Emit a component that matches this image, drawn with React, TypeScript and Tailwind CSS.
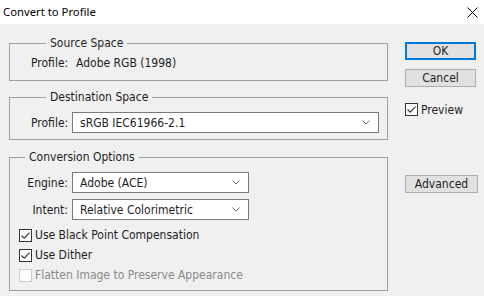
import React from "react";

const ui = { fontFamily: '"DejaVu Sans Condensed", "DejaVu Sans", sans-serif' };

function Check({ checked = false, disabled = false }: { checked?: boolean; disabled?: boolean }) {
  return (
    <span
      className={
        "flex h-[13px] w-[13px] shrink-0 items-center justify-center border " +
        (disabled ? "border-[#cccccc] bg-[#fcfcfc]" : "border-[#333333] bg-white")
      }
    >
      {checked && (
        <svg width="11" height="11" viewBox="0 0 11 11">
          <path d="M1.5 5.5 L4.2 8.2 L9.6 2.6" fill="none" stroke="#333" strokeWidth="1.1" />
        </svg>
      )}
    </span>
  );
}

function Select({ value, width }: { value: string; width: string }) {
  return (
    <div className={`flex h-[21px] items-center justify-between border border-[#7a7a7a] bg-white pl-[7px] pr-[8px] ${width}`}>
      <span>{value}</span>
      <svg width="8" height="5" viewBox="0 0 8 5">
        <path d="M0.5 0.5 L4 4 L7.5 0.5" fill="none" stroke="#6d6d6d" strokeWidth="1" />
      </svg>
    </div>
  );
}

function Group({ title, className, children }: { title: string; className: string; children: React.ReactNode }) {
  return (
    <fieldset className={`w-[379px] border border-[#a0a0a0] ${className}`}>
      <legend className="ml-[15px] px-[4px] leading-[14px]">{title}</legend>
      {children}
    </fieldset>
  );
}

function Button({ label, primary = false, width }: { label: string; primary?: boolean; width: string }) {
  return (
    <button
      className={
        `flex h-[18px] items-center justify-center bg-[#e1e1e1] leading-none ${width} ` +
        (primary ? "border-2 border-[#0078d7]" : "border border-[#adadad]")
      }
    >
      {label}
    </button>
  );
}

export default function App() {
  return (
    <div className="h-[296px] w-[484px] overflow-hidden bg-[#f0f0f0] text-[12px] text-[#1e1e1e]" style={ui}>
      {/* Title bar */}
      <div className="flex h-[24px] items-center justify-between bg-white pl-[3px] pr-[6px] text-black">
        <span className="text-[11.3px]" style={{ fontFamily: '"Noto Sans", sans-serif' }}>Convert to Profile</span>
        <svg width="11" height="11" viewBox="0 0 11 11">
          <path d="M0.5 0.5 L10.5 10.5 M10.5 0.5 L0.5 10.5" stroke="#000" strokeWidth="1" />
        </svg>
      </div>

      <div className="flex">
        {/* Left column */}
        <div className="flex flex-col pl-[9px]">
          <Group title="Source Space" className="mt-[12px] pb-[9px] pl-[21px] pt-[5px]">
            <div className="flex h-[16px] items-center">
              <span className="w-[45px]">Profile:</span>
              <span>Adobe RGB (1998)</span>
            </div>
          </Group>

          <Group title="Destination Space" className="mt-[9px] pb-[6px] pl-[21px] pt-[8px]">
            <div className="flex items-center">
              <span className="w-[41px]">Profile:</span>
              <Select value="sRGB IEC61966-2.1" width="w-[307px]" />
            </div>
          </Group>

          <Group title="Conversion Options" className="mt-[10px] pb-[5px] pt-[8px]">
            <div className="flex flex-col gap-[6px]">
              <div className="flex items-center">
                <span className="w-[62px] pr-[4px] text-right">Engine:</span>
                <Select value="Adobe (ACE)" width="w-[177px]" />
              </div>
              <div className="flex items-center">
                <span className="w-[62px] pr-[4px] text-right">Intent:</span>
                <Select value="Relative Colorimetric" width="w-[177px]" />
              </div>
            </div>
            <div className="mt-[5px] flex flex-col pl-[9px]">
              <label className="flex h-[20px] items-center gap-[3px]">
                <Check checked />
                <span>Use Black Point Compensation</span>
              </label>
              <label className="flex h-[20px] items-center gap-[3px]">
                <Check checked />
                <span>Use Dither</span>
              </label>
              <label className="flex h-[20px] items-center gap-[3px] text-[#8a8a8a]">
                <Check disabled />
                <span>Flatten Image to Preserve Appearance</span>
              </label>
            </div>
          </Group>
        </div>

        {/* Right column */}
        <div className="ml-[17px] flex flex-col pt-[18px]">
          <Button label="OK" primary width="w-[71px]" />
          <div className="mt-[9px]">
            <Button label="Cancel" width="w-[71px]" />
          </div>
          <label className="mt-[15px] flex h-[15px] items-center gap-[3px]">
            <Check checked />
            <span>Preview</span>
          </label>
          <div className="mt-[58px]">
            <Button label="Advanced" width="w-[73px]" />
          </div>
        </div>
      </div>
    </div>
  );
}
